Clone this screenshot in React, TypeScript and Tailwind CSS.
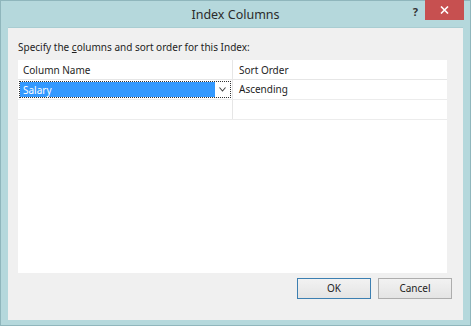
import React from 'react';

const font = { fontFamily: '"Noto Sans", "Open Sans", "Liberation Sans", sans-serif' };

const App: React.FC = () => {
  return (
    <div
      className="w-[471px] h-[326px] bg-[#b5d8dc] border border-[#8fb6bc] flex flex-col text-[#1e1e1e]"
      style={font}
    >
      {/* title bar */}
      <div className="relative h-[26px] flex items-center justify-center">
        <span className="text-[12.5px] text-[#2b2b2b] mt-[3px]">Index Columns</span>
        <span className="absolute right-[52px] top-[3px] text-[11px] font-bold text-[#333]">?</span>
        <button className="absolute right-[6px] top-[-1px] w-[39px] h-[20px] bg-[#c75050] flex items-center justify-center">
          <svg width="9" height="8" viewBox="0 0 9 8">
            <path d="M1 0.5 L8 7.5 M8 0.5 L1 7.5" stroke="#fff" strokeWidth="1.6" />
          </svg>
        </button>
      </div>

      {/* client */}
      <div className="flex-1 mx-[7px] mb-[5px] bg-[#f0f0f0] border-t border-[#a9cdd2] flex flex-col pl-[10px] pr-[16px] pt-[11px]">
        <div className="text-[10px] leading-[16px] text-[#1e1e1e]">
          Specify the <span className="underline">c</span>olumns and sort order for this Index:
        </div>

        <div className="mt-[5px] h-[213px] bg-white flex flex-col text-[10px]">
          <div className="flex h-[20px] border-b border-[#e6e6e6]">
            <div className="w-[215px] border-r border-[#e6e6e6] pl-[5px] leading-[20px]">Column Name</div>
            <div className="flex-1 pl-[6px] leading-[20px]">Sort Order</div>
          </div>
          <div className="flex h-[20px] border-b border-[#ececec]">
            <div className="w-[215px] border-r border-[#e6e6e6] p-[1px]">
              <div className="h-full border border-dotted border-[#333] flex items-center">
                <div className="w-[195px] h-full bg-[#3399ff] text-white pl-[3px] leading-[16px]">Salary</div>
                <div className="flex-1 flex items-center justify-center">
                  <svg width="7" height="5" viewBox="0 0 7 5">
                    <path d="M0.5 0.5 L3.5 4 L6.5 0.5" stroke="#444" strokeWidth="1.1" fill="none" />
                  </svg>
                </div>
              </div>
            </div>
            <div className="flex-1 pl-[6px] leading-[19px]">Ascending</div>
          </div>
          <div className="flex h-[20px] border-b border-[#ececec]">
            <div className="w-[215px] border-r border-[#e6e6e6]"></div>
            <div className="flex-1"></div>
          </div>
        </div>

        <div className="flex justify-end gap-[7px] mt-[5px] mr-[-5px]">
          <button className="w-[74px] h-[21px] border border-[#3c7fb1] bg-gradient-to-b from-[#f2f2f2] to-[#e4e4e4] text-[10px]">
            OK
          </button>
          <button className="w-[74px] h-[21px] border border-[#adadad] bg-gradient-to-b from-[#f2f2f2] to-[#e4e4e4] text-[10px]">
            Cancel
          </button>
        </div>
      </div>
    </div>
  );
};

export default App;
